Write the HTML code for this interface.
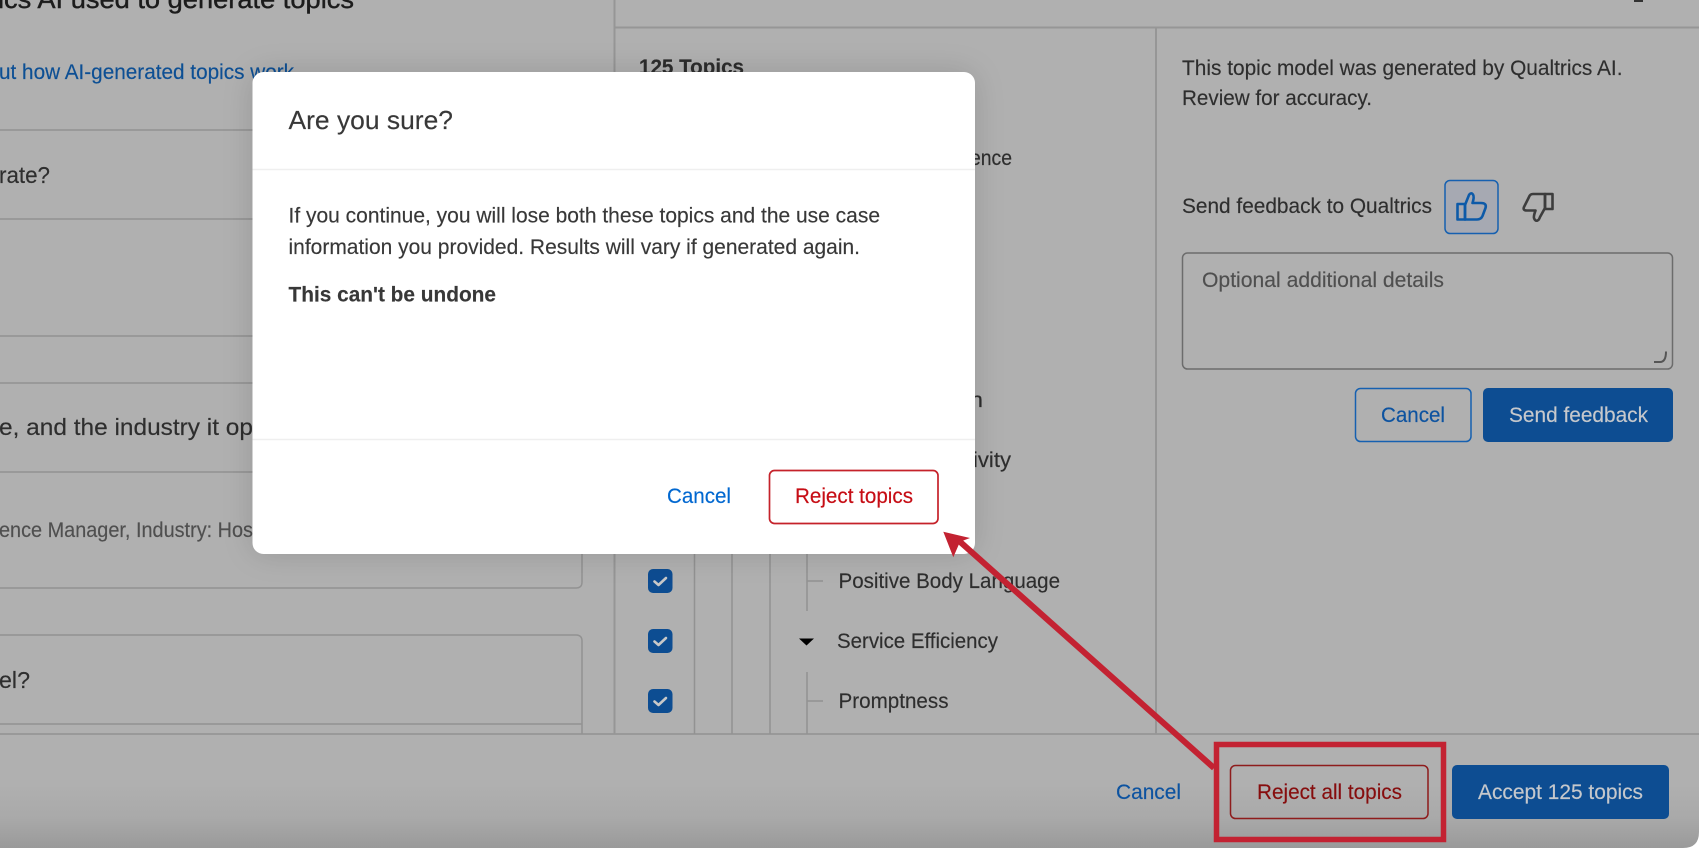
<!DOCTYPE html>
<html lang="en">
<head>
<meta charset="utf-8">
<title>Are you sure?</title>
<style>
html,body{margin:0;padding:0;background:#fff;width:1700px;height:850px;overflow:hidden}
svg{display:block}
text{font-family:"Liberation Sans",sans-serif;font-size:21px;color:#2e2e2e;fill:currentColor;stroke:currentColor;stroke-width:.15}
</style>
</head>
<body>
<svg width="1700" height="850" viewBox="0 0 1700 850" xmlns="http://www.w3.org/2000/svg">
<defs>
<linearGradient id="bg" x1="0" y1="0" x2="0" y2="1">
<stop offset="0" stop-color="#b0b0b0"/><stop offset=".925" stop-color="#b0b0b0"/><stop offset=".965" stop-color="#a9a9a9"/><stop offset="1" stop-color="#9a9a9a"/>
</linearGradient>
<filter id="sh" x="-20%" y="-20%" width="140%" height="140%"><feGaussianBlur stdDeviation="16"/></filter>
<filter id="soft" x="-2%" y="-2%" width="104%" height="104%"><feGaussianBlur stdDeviation="0.3"/></filter>
</defs>
<path d="M0 0H1699V832Q1699 848 1683 848H0Z" fill="url(#bg)"/>
<g filter="url(#soft)">
<!-- structural lines -->
<g stroke="#929292" stroke-width="1.5" fill="none">
<path d="M0 130H582M0 219H582M0 336H582M0 383H582M0 472H582M0 724H582"/>
<path d="M0 588H576Q582 588 582 582V383"/>
<path d="M0 635H576Q582 635 582 641V734"/>
<path d="M0 734H1699"/>
<path d="M694.500 80V734M732 80V734M770 80V734M807 80V611M807 672V734M807 581H823M807 701H823"/>
</g>
<path d="M614.500 0V734M615 27.500H1699M1156 27V734" stroke="#969696" stroke-width="2" fill="none"/>
<rect x="1634" y="0" width="9" height="2" fill="#333"/>

<!-- left panel text -->
<text x="-2" y="8" textLength="356" lengthAdjust="spacingAndGlyphs" style="font-size:26px;color:#1c1c1c;stroke-width:.4">ics AI used to generate topics</text>
<text x="-1" y="79" textLength="295" lengthAdjust="spacingAndGlyphs" style="color:#0a4f94">ut how AI-generated topics work</text>
<text x="-1" y="183" textLength="51" lengthAdjust="spacingAndGlyphs" style="font-size:23px">rate?</text>
<text x="-1" y="435" textLength="254" lengthAdjust="spacingAndGlyphs" style="font-size:23px">e, and the industry it op</text>
<text x="-1" y="537" textLength="254" lengthAdjust="spacingAndGlyphs" style="color:#505050">ence Manager, Industry: Hos</text>
<text x="-1" y="688" textLength="31" lengthAdjust="spacingAndGlyphs" style="font-size:23px">el?</text>

<!-- tree -->
<text x="639" y="74" textLength="105" lengthAdjust="spacingAndGlyphs" style="font-weight:bold">125 Topics</text>
<text x="970" y="165" textLength="42" lengthAdjust="spacingAndGlyphs">ence</text>
<text x="970" y="407" textLength="13" lengthAdjust="spacingAndGlyphs">n</text>
<text x="973" y="467" textLength="38" lengthAdjust="spacingAndGlyphs">ivity</text>
<text x="838.500" y="588" textLength="221.500" lengthAdjust="spacingAndGlyphs">Positive Body Language</text>
<text x="837" y="648" textLength="161" lengthAdjust="spacingAndGlyphs">Service Efficiency</text>
<text x="838.500" y="708" textLength="110" lengthAdjust="spacingAndGlyphs">Promptness</text>
<path d="M799 638.500H814L806.500 645.500Z" fill="#000"/>
<g>
<rect x="648" y="569" width="24.500" height="24" rx="5" fill="#0a4d92"/>
<rect x="648" y="629" width="24.500" height="24" rx="5" fill="#0a4d92"/>
<rect x="648" y="689" width="24.500" height="24" rx="5" fill="#0a4d92"/>
<g fill="none" stroke="#c8c8c8" stroke-width="2.600" stroke-linecap="round" stroke-linejoin="round">
<path d="M654.500 581.500L658.500 585L666 578"/>
<path d="M654.500 641.500L658.500 645L666 638"/>
<path d="M654.500 701.500L658.500 705L666 698"/>
</g>
</g>

<!-- right feedback panel -->
<text x="1182" y="75" textLength="440.500" lengthAdjust="spacingAndGlyphs">This topic model was generated by Qualtrics AI.</text>
<text x="1182" y="105" textLength="190" lengthAdjust="spacingAndGlyphs">Review for accuracy.</text>
<text x="1182" y="213" textLength="250" lengthAdjust="spacingAndGlyphs">Send feedback to Qualtrics</text>
<rect x="1445" y="180.500" width="53" height="53" rx="5" fill="#a6a9b2" stroke="#1460b0" stroke-width="1.500"/>
<g fill="none" stroke="#0f5aa8" stroke-width="2.600" stroke-linejoin="round">
<rect x="1457.500" y="204" width="7.500" height="15.500"/>
<path d="M1465 205L1469 195Q1471 192 1473 194.500Q1474.500 197 1472.500 203H1481Q1487 203 1485.500 208L1482.500 216Q1481 219.500 1477 219.500H1465Z"/>
</g>
<g fill="none" stroke="#3c3c3c" stroke-width="2.600" stroke-linejoin="round">
<rect x="1545" y="194" width="7.500" height="15"/>
<path d="M1545 194H1533Q1530 194 1529 197L1524 207Q1522.500 210.500 1527 210.500H1535.500Q1533.500 216 1534 218Q1535 221.500 1537.500 220.500Q1539 220 1540 217L1545 208Z"/>
</g>
<rect x="1182.500" y="253" width="490" height="116" rx="5" fill="none" stroke="#6c6c6c" stroke-width="1.500"/>
<text x="1202" y="287" textLength="242" lengthAdjust="spacingAndGlyphs" style="color:#505050">Optional additional details</text>
<path d="M1654 362H1660Q1666 362 1666 351.500" fill="none" stroke="#555" stroke-width="2"/>
<rect x="1355.500" y="388.500" width="115.500" height="53" rx="5" fill="none" stroke="#1460b0" stroke-width="1.500"/>
<text x="1381" y="422" textLength="64" lengthAdjust="spacingAndGlyphs" style="color:#0a52a0">Cancel</text>
<rect x="1483" y="388" width="190" height="54" rx="5" fill="#0a4d92"/>
<text x="1509" y="422" textLength="139" lengthAdjust="spacingAndGlyphs" style="color:#c6c8cc">Send feedback</text>

<!-- footer -->
<text x="1116" y="799" textLength="65" lengthAdjust="spacingAndGlyphs" style="color:#0a52a0">Cancel</text>
<rect x="1230.500" y="765.500" width="197.500" height="53" rx="5" fill="none" stroke="#8e1a1d" stroke-width="1.500"/>
<text x="1257" y="799" textLength="145" lengthAdjust="spacingAndGlyphs" style="color:#860c10">Reject all topics</text>
<rect x="1452" y="765" width="217" height="54" rx="5" fill="#0a4d92"/>
<text x="1478" y="799" textLength="165" lengthAdjust="spacingAndGlyphs" style="color:#c6c8cc">Accept 125 topics</text>

<!-- modal -->
<rect x="252" y="72" width="723" height="482" rx="12" fill="#000" opacity=".14" filter="url(#sh)"/>
<rect x="252.500" y="72" width="722.500" height="482" rx="11" fill="#fff"/>
<path d="M252.500 169.500H975M252.500 439.500H975" stroke="#efefef" stroke-width="1.500"/>
<text x="288.500" y="129" textLength="164.500" lengthAdjust="spacingAndGlyphs" style="font-size:26px;color:#383838">Are you sure?</text>
<text x="288.500" y="222.500" textLength="591.500" lengthAdjust="spacingAndGlyphs" style="color:#383838">If you continue, you will lose both these topics and the use case</text>
<text x="288.500" y="254" textLength="571.500" lengthAdjust="spacingAndGlyphs" style="color:#383838">information you provided. Results will vary if generated again.</text>
<text x="288.500" y="301.500" textLength="207.500" lengthAdjust="spacingAndGlyphs" style="color:#383838;font-weight:bold">This can't be undone</text>
<text x="667" y="503" textLength="64" lengthAdjust="spacingAndGlyphs" style="color:#0668d0">Cancel</text>
<rect x="769.500" y="470.500" width="168.500" height="53" rx="5" fill="#fff" stroke="#c5222a" stroke-width="1.700"/>
<text x="795" y="503" textLength="118" lengthAdjust="spacingAndGlyphs" style="color:#c60a12">Reject topics</text>
</g>

<!-- annotation -->
<g filter="url(#soft)">
<path d="M960 541.700L1214 768" stroke="#c32330" stroke-width="6" fill="none"/>
<path d="M943.300 531.700L970 538L960 541.700L953.300 557.300Z" fill="#c32330"/>
<rect x="1216.500" y="744.500" width="227" height="95" fill="none" stroke="#c32330" stroke-width="5.500"/>
</g>
</svg>
</body>
</html>
